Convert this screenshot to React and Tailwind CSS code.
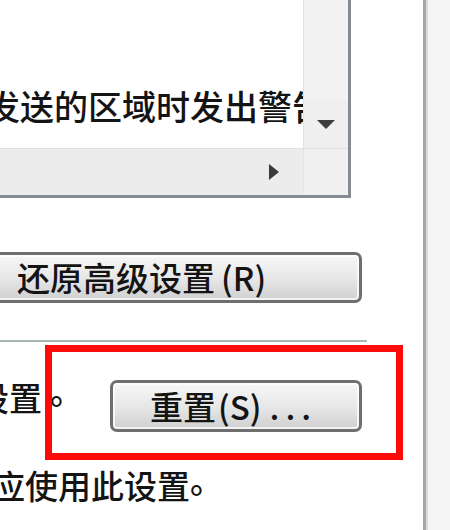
export default function App() {
  const btn =
    "rounded-[7px] border-[3px] border-[#6f6f6f] bg-linear-to-b from-[#f7f7f7] via-[#e8e8e8] to-[#d0d0d0] shadow-[inset_0_0_0_2px_rgba(255,255,255,0.75)] flex items-center text-[33px] leading-none text-[#141414]";
  return (
    <div className="relative w-[450px] h-[530px] overflow-hidden bg-white flex font-['Noto_Sans_CJK_SC','Noto_Sans_CJK_JP',sans-serif] font-medium text-[#141414]">
      <div className="w-[423px] flex flex-col overflow-hidden shrink-0">
        {/* list box */}
        <div className="ml-[-20px] w-[371px] h-[198px] shrink-0 border-r-[3px] border-b-[3px] border-[#868b92] flex flex-col bg-white">
          <div className="flex flex-1 min-h-0">
            <div className="flex-1 overflow-hidden pt-[89px] pl-[6px]">
              <div className="whitespace-nowrap text-[34px] leading-none">发送的区域时发出警告</div>
            </div>
            <div className="w-[45px] bg-[#f2f2f2] border-l border-[#e2e2e2] flex flex-col justify-end">
              <div className="h-[48px] flex items-center justify-center bg-[#efefef]">
                <svg width="18" height="9" viewBox="0 0 18 9">
                  <polygon points="0,0 18,0 9,9" fill="#3d3d3d" />
                </svg>
              </div>
            </div>
          </div>
          <div className="h-[47px] flex border-t border-[#e0e0e0]">
            <div className="flex-1 bg-[#ececec] flex items-center justify-end pr-[24px]">
              <svg width="10" height="16" viewBox="0 0 10 16">
                <polygon points="0,0 10,8 0,16" fill="#3a3a3a" />
              </svg>
            </div>
            <div className="w-[45px] bg-[#f0f0f0] border-l border-[#e4e4e4]" />
          </div>
        </div>

        {/* restore advanced settings button */}
        <div className={"mt-[54px] ml-[-10px] w-[372px] h-[51px] shrink-0 pl-[24px] " + btn}>
          <span>还原高级设置</span>
          <span className="ml-[6px]">(R)</span>
        </div>

        {/* separator */}
        <div className="mt-[37px] w-[367px] h-[2px] shrink-0 bg-[#a7b5b5]" />

        {/* reset row */}
        <div className="mt-[38px] flex items-start h-[52px] shrink-0">
          <div className="ml-[-24px] w-[134px] shrink-0 pt-[1px] text-[33px] leading-none whitespace-nowrap">
            设置<span className="inline-block ml-[8px] -translate-y-[7px]">。</span>
          </div>
          <div className={"w-[252px] h-[52px] shrink-0 pl-[37px] " + btn}>
            <span>重置</span>
            <span className="ml-[2px]">(S)</span>
            <span className="ml-[8px] tracking-[6px]">...</span>
          </div>
        </div>

        {/* bottom text */}
        <div className="mt-[37px] ml-[-8px] text-[33px] leading-none whitespace-nowrap">
          应使用此设置<span className="inline-block -translate-y-[6px]">。</span>
        </div>
      </div>
      <div className="w-[3px] shrink-0 bg-[#a4a6a8]" />
      <div className="w-[2px] shrink-0 bg-[#d7dde2]" />
      <div className="flex-1 bg-[#f5f5f5]" />

      {/* red annotation box */}
      <div className="absolute left-[45px] top-[345px] w-[358px] h-[115px] border-[7px] border-[#ff0a0a]" />
    </div>
  );
}
